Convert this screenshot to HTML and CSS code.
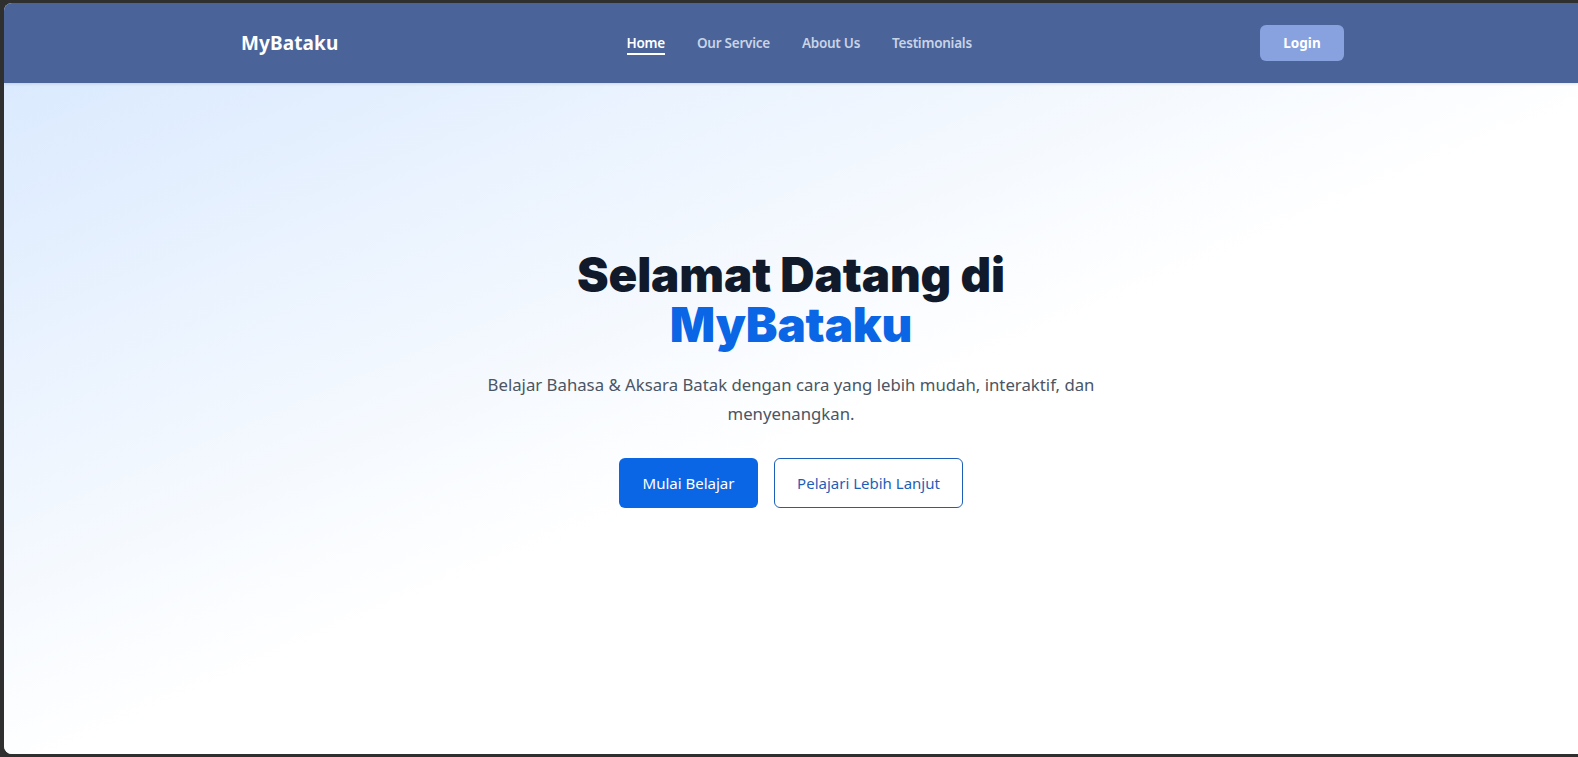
FILE: index.html
```html
<!DOCTYPE html>
<html lang="id">
<head>
<meta charset="utf-8">
<title>MyBataku</title>
<link rel="stylesheet" href="styles.css">
</head>
<body>
<div class="window">
  <header class="navbar">
    <a class="logo" href="#">MyBataku</a>
    <nav class="nav-links">
      <a class="nav-link active" href="#">Home</a>
      <a class="nav-link" href="#">Our Service</a>
      <a class="nav-link" href="#">About Us</a>
      <a class="nav-link" href="#">Testimonials</a>
    </nav>
    <a class="login-btn" href="#">Login</a>
  </header>
  <main class="hero">
    <h1 class="hero-title"><span class="line">Selamat Datang di</span><span class="line accent">MyBataku</span></h1>
    <p class="hero-sub">Belajar Bahasa &amp; Aksara Batak dengan cara yang lebih mudah, interaktif, dan menyenangkan.</p>
    <div class="hero-actions">
      <a class="btn btn-primary" href="#">Mulai Belajar</a>
      <a class="btn btn-outline" href="#">Pelajari Lebih Lanjut</a>
    </div>
  </main>
</div>
</body>
</html>
```
FILE: styles.css
```css
* { box-sizing: border-box; }
html, body { height: 100%; }
body {
  margin: 0;
  background: #2f2f2f;
  font-family: "Noto Sans", "Open Sans", "Liberation Sans", sans-serif;
  padding: 3px 0 3px 4px;
}
a { text-decoration: none; }
.window {
  height: 100%;
  display: flex;
  flex-direction: column;
  border-radius: 8px 0 0 8px;
  overflow: hidden;
  background: #fff;
}
.navbar {
  height: 80px;
  flex: none;
  display: flex;
  align-items: center;
  justify-content: space-between;
  padding: 0 234px 0 237px;
  background: #4a6399;
  box-shadow: 0 1px 3px rgba(0,0,0,0.12);
  position: relative;
  z-index: 1;
}
.logo {
  color: #fff;
  font-weight: 700;
  font-size: 19px;
  letter-spacing: 0.1px;
}
.nav-links {
  display: flex;
  gap: 32px;
  padding-top: 2px;
}
.nav-link {
  color: #c9d3e6;
  font-size: 13.5px;
  font-weight: 600;
  letter-spacing: -0.25px;
  padding-bottom: 1px;
}
.nav-link.active {
  color: #fff;
  border-bottom: 2px solid #fff;
}
.login-btn {
  width: 84px;
  height: 36px;
  display: flex;
  align-items: center;
  justify-content: center;
  background: #87a2df;
  color: #fff;
  border-radius: 6px;
  font-weight: 700;
  font-size: 13.5px;
}
.hero {
  flex: 1;
  display: flex;
  flex-direction: column;
  align-items: center;
  padding-top: 167px;
  background: linear-gradient(to bottom right, #dbeafe 0%, #ffffff 52%, #ffffff 100%);
  text-align: center;
}
.hero-title {
  margin: 0;
  font-family: "Inter", sans-serif;
  font-weight: 900;
  font-size: 47.5px;
  letter-spacing: -0.15px;
  color: #111a2b;
}
.line {
  display: block;
  line-height: 50px;
}
.accent { color: #0a66e4; }
.hero-sub {
  margin: 21px 0 0;
  max-width: 660px;
  font-size: 16.75px;
  line-height: 28.5px;
  color: #4b5563;
}
.hero-actions {
  margin-top: 30px;
  display: flex;
  gap: 16px;
}
.btn {
  height: 50px;
  display: flex;
  align-items: center;
  justify-content: center;
  border-radius: 6px;
  font-size: 15px;
}
.btn-primary {
  width: 139px;
  background: #0a66e4;
  color: #fff;
}
.btn-outline {
  width: 189px;
  border: 1px solid #1d5fb8;
  background: #fff;
  color: #1d5fb8;
}
```
